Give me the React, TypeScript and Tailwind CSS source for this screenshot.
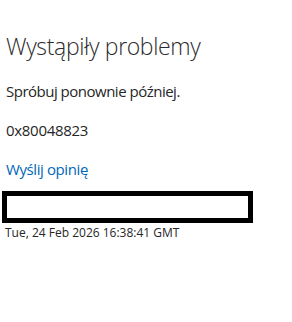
export default function App() {
  return (
    <div className="w-[292px] h-[322px] bg-white text-[#262626]" style={{ fontFamily: '"Open Sans", "Noto Sans", sans-serif' }}>
      <div className="pl-[6px] pt-[31px]">
        <h1 className="text-[23px] leading-[30px] font-light tracking-[-0.35px] text-[#2b2b2b]">Wystąpiły problemy</h1>
        <p className="mt-[20px] text-[15px] leading-[20px] tracking-[-0.5px]">Spróbuj ponownie później.</p>
        <p className="mt-[19px] text-[15px] leading-[20px] tracking-[-0.3px]">0x80048823</p>
        <a className="block mt-[19px] text-[15px] leading-[20px] tracking-[-0.4px] text-[#0067b8]">Wyślij opinię</a>
      </div>
      <div className="ml-[2px] mt-[12px] w-[251px] h-[32px] border-[5px] border-black" />
      <div className="pl-[5px] mt-[2px] text-[12px] leading-[15px]">Tue, 24 Feb 2026 16:38:41 GMT</div>
    </div>
  );
}
